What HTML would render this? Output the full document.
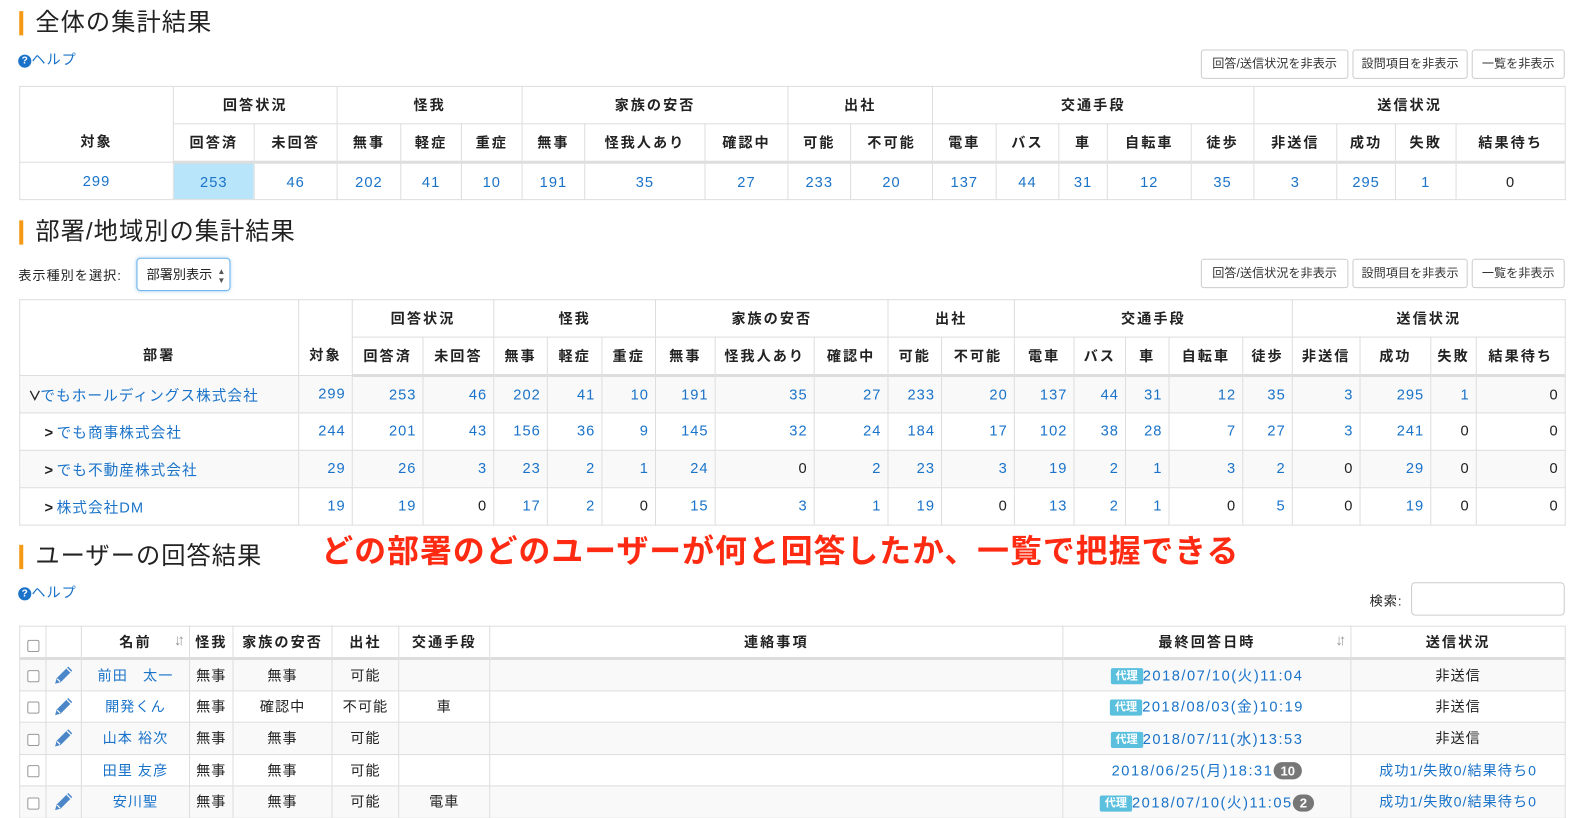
<!DOCTYPE html>
<html><head><meta charset="utf-8"><style>
*{box-sizing:border-box;margin:0;padding:0}
html,body{width:1585px;height:818px;overflow:hidden;background:#fff}
#w{width:1568px;height:810px;position:relative;transform:scale(1.0108);transform-origin:0 0;font-family:"Liberation Sans","Noto Sans CJK JP",sans-serif;color:#222;font-size:14px}
.abs{position:absolute}
h2{position:absolute;left:19px;font-weight:normal;font-size:24px;color:#222;padding-left:16px;line-height:26px;letter-spacing:1px}
h2:before{content:"";position:absolute;left:0;top:1px;width:4px;height:24px;background:#f59a16}
.help{position:absolute;left:18px;color:#1a73c9;font-size:14px;letter-spacing:1px}
.help i{display:inline-block;width:13px;height:13px;border-radius:50%;background:#1a73c9;color:#fff;font-style:normal;font-size:10px;font-weight:bold;text-align:center;line-height:13px;vertical-align:1px;letter-spacing:0}
.btn{position:absolute;height:29px;border:1px solid #ccc;border-radius:3px;background:#fff;font-size:12px;text-align:center;line-height:27px;color:#333}
table{position:absolute;left:19px;width:1529px;border-collapse:collapse;table-layout:fixed}
td,th{border:1px solid #ddd;text-align:center;font-size:14.5px;letter-spacing:1px;white-space:nowrap;overflow:hidden}
th{font-weight:bold;font-size:14px;letter-spacing:2px}
.b{color:#1a73c9}
thead tr:last-child th{border-bottom:3px solid #ddd}
.t1 th{height:37px}
.t1 thead tr:last-child th{height:38px}
.t1 td{height:37px;padding-top:2px}
.t2 th{height:37px}
.t2 thead tr:last-child th{height:38px}
.t2 td{height:37px;text-align:right;padding-right:6px}
.t2 td.l{text-align:left;padding-left:8px}
.t2 tbody tr:nth-child(odd) td,.t3 tbody tr:nth-child(odd) td{background:#f9f9f9}
.t3 th{height:32px}
.t3 td{height:31.5px;font-size:14px}
.t3 td.d{letter-spacing:1.5px;font-size:14.5px}
.cb{display:inline-block;width:12px;height:12px;border:1px solid #999;border-radius:2px;background:#fff;vertical-align:middle}
.dai{display:inline-block;background:#5bc0de;color:#fff;font-size:11px;font-weight:bold;padding:0 5px;border-radius:2px;line-height:16px;vertical-align:1px;letter-spacing:0}
.badge{display:inline-block;background:#777;color:#fff;font-size:13px;font-weight:bold;padding:0 7px;border-radius:9px;line-height:17px;vertical-align:0;letter-spacing:0}
.sort{position:absolute;right:8px;top:5px;color:#999;font-size:15px;font-weight:bold;letter-spacing:-4px}
.arr{color:#222;font-weight:bold;display:inline-block;width:12px}
.pen{vertical-align:middle}
</style></head><body><div id="w">

<h2 style="top:10px">全体の集計結果</h2>
<div class="help" style="top:49px"><i>?</i>ヘルプ</div>
<div class="btn" style="left:1188px;top:49px;width:146px">回答/送信状況を非表示</div>
<div class="btn" style="left:1338px;top:49px;width:114px">設問項目を非表示</div>
<div class="btn" style="left:1456px;top:49px;width:92px">一覧を非表示</div>

<table class="t1" style="top:85px">
<colgroup><col style="width:152px"><col style="width:80px"><col style="width:82px"><col style="width:63px"><col style="width:60px"><col style="width:60px"><col style="width:62px"><col style="width:119px"><col style="width:82px"><col style="width:62px"><col style="width:81px"><col style="width:63px"><col style="width:62px"><col style="width:48px"><col style="width:83px"><col style="width:62px"><col style="width:82px"><col style="width:58px"><col style="width:60px"><col style="width:108px"></colgroup>
<thead><tr><th rowspan="2" style="vertical-align:bottom;padding-bottom:10px">対象</th><th colspan="2">回答状況</th><th colspan="3">怪我</th><th colspan="3">家族の安否</th><th colspan="2">出社</th><th colspan="5">交通手段</th><th colspan="4">送信状況</th></tr>
<tr><th>回答済</th><th>未回答</th><th>無事</th><th>軽症</th><th>重症</th><th>無事</th><th>怪我人あり</th><th>確認中</th><th>可能</th><th>不可能</th><th>電車</th><th>バス</th><th>車</th><th>自転車</th><th>徒歩</th><th>非送信</th><th>成功</th><th>失敗</th><th>結果待ち</th></tr></thead>
<tbody><tr class="b"><td>299</td><td style="background:#b9e5fb">253</td><td>46</td><td>202</td><td>41</td><td>10</td><td>191</td><td>35</td><td>27</td><td>233</td><td>20</td><td>137</td><td>44</td><td>31</td><td>12</td><td>35</td><td>3</td><td>295</td><td>1</td><td style="color:#222">0</td></tr></tbody>
</table>

<h2 style="top:217px">部署/地域別の集計結果</h2>
<div class="abs" style="left:18px;top:262px;font-size:13px;letter-spacing:1px">表示種別を選択:</div>
<div class="abs" style="left:135px;top:255px;width:93px;height:33px;border:1px solid #66afe9;border-radius:4px;font-size:13px;line-height:31px;padding-left:9px;box-shadow:0 0 3px rgba(102,175,233,.5)">部署別表示<span style="font-size:8px;position:absolute;right:4px;top:0;line-height:9px;padding-top:8px;color:#555">▲<br>▼</span></div>
<div class="btn" style="left:1188px;top:256px;width:146px">回答/送信状況を非表示</div>
<div class="btn" style="left:1338px;top:256px;width:114px">設問項目を非表示</div>
<div class="btn" style="left:1456px;top:256px;width:92px">一覧を非表示</div>

<table class="t2" style="top:296px">
<colgroup><col style="width:276px"><col style="width:53px"><col style="width:70px"><col style="width:70px"><col style="width:53px"><col style="width:54px"><col style="width:53px"><col style="width:59px"><col style="width:98px"><col style="width:73px"><col style="width:53px"><col style="width:72px"><col style="width:59px"><col style="width:51px"><col style="width:43px"><col style="width:73px"><col style="width:49px"><col style="width:67px"><col style="width:70px"><col style="width:45px"><col style="width:88px"></colgroup>
<thead><tr><th rowspan="2" style="vertical-align:bottom;padding-bottom:10px">部署</th><th rowspan="2" style="vertical-align:bottom;padding-bottom:10px">対象</th><th colspan="2">回答状況</th><th colspan="3">怪我</th><th colspan="3">家族の安否</th><th colspan="2">出社</th><th colspan="5">交通手段</th><th colspan="4">送信状況</th></tr>
<tr><th>回答済</th><th>未回答</th><th>無事</th><th>軽症</th><th>重症</th><th>無事</th><th>怪我人あり</th><th>確認中</th><th>可能</th><th>不可能</th><th>電車</th><th>バス</th><th>車</th><th>自転車</th><th>徒歩</th><th>非送信</th><th>成功</th><th>失敗</th><th>結果待ち</th></tr></thead>
<tbody>
<tr class="b"><td class="l"><span class="arr" style="font-size:13px">∨</span>でもホールディングス株式会社</td><td>299</td><td>253</td><td>46</td><td>202</td><td>41</td><td>10</td><td>191</td><td>35</td><td>27</td><td>233</td><td>20</td><td>137</td><td>44</td><td>31</td><td>12</td><td>35</td><td>3</td><td>295</td><td>1</td><td style="color:#222">0</td></tr>
<tr class="b"><td class="l" style="padding-left:24px"><span class="arr">&gt;</span>でも商事株式会社</td><td>244</td><td>201</td><td>43</td><td>156</td><td>36</td><td>9</td><td>145</td><td>32</td><td>24</td><td>184</td><td>17</td><td>102</td><td>38</td><td>28</td><td>7</td><td>27</td><td>3</td><td>241</td><td style="color:#222">0</td><td style="color:#222">0</td></tr>
<tr class="b"><td class="l" style="padding-left:24px"><span class="arr">&gt;</span>でも不動産株式会社</td><td>29</td><td>26</td><td>3</td><td>23</td><td>2</td><td>1</td><td>24</td><td style="color:#222">0</td><td>2</td><td>23</td><td>3</td><td>19</td><td>2</td><td>1</td><td>3</td><td>2</td><td style="color:#222">0</td><td>29</td><td style="color:#222">0</td><td style="color:#222">0</td></tr>
<tr class="b"><td class="l" style="padding-left:24px"><span class="arr">&gt;</span>株式会社DM</td><td>19</td><td>19</td><td style="color:#222">0</td><td>17</td><td>2</td><td style="color:#222">0</td><td>15</td><td>3</td><td>1</td><td>19</td><td style="color:#222">0</td><td>13</td><td>2</td><td>1</td><td style="color:#222">0</td><td>5</td><td style="color:#222">0</td><td>19</td><td style="color:#222">0</td><td style="color:#222">0</td></tr>
</tbody></table>

<h2 style="top:538px">ユーザーの回答結果</h2>
<div class="abs" style="left:318px;top:520px;font-size:31.5px;font-weight:bold;color:#ff2a12;letter-spacing:1px">どの部署のどのユーザーが何と回答したか、一覧で把握できる</div>
<div class="help" style="top:576px"><i>?</i>ヘルプ</div>
<div class="abs" style="left:1355px;top:584px;font-size:13px;letter-spacing:1px">検索:</div>
<div class="abs" style="left:1396px;top:576px;width:152px;height:33px;border:1px solid #ccc;border-radius:4px"></div>

<table class="t3" style="top:619px">
<colgroup><col style="width:26px"><col style="width:35px"><col style="width:107px"><col style="width:43px"><col style="width:98px"><col style="width:66px"><col style="width:90px"><col style="width:567px"><col style="width:285px"><col style="width:212px"></colgroup>
<thead><tr><th style="vertical-align:bottom;padding-bottom:4px"><span class="cb"></span></th><th></th><th style="position:relative">名前<span class="sort">↓↑</span></th><th>怪我</th><th>家族の安否</th><th>出社</th><th>交通手段</th><th>連絡事項</th><th style="position:relative">最終回答日時<span class="sort">↓↑</span></th><th>送信状況</th></tr></thead>
<tbody>
<tr><td><span class="cb"></span></td><td><svg class="pen" width="22" height="22" viewBox="0 0 22 22"><path d="M15.5 2.5l4 4L8 18l-5.5 1.5L4 14z" fill="#4a86c8"/><path d="M14 4l4 4M4.5 14.5l3 3" stroke="#fff" stroke-width="1.2"/></svg></td><td class="b">前田　太一</td><td>無事</td><td>無事</td><td>可能</td><td></td><td></td><td class="b d"><span class="dai">代理</span>2018/07/10(火)11:04</td><td>非送信</td></tr>
<tr><td><span class="cb"></span></td><td><svg class="pen" width="22" height="22" viewBox="0 0 22 22"><path d="M15.5 2.5l4 4L8 18l-5.5 1.5L4 14z" fill="#4a86c8"/><path d="M14 4l4 4M4.5 14.5l3 3" stroke="#fff" stroke-width="1.2"/></svg></td><td class="b">開発くん</td><td>無事</td><td>確認中</td><td>不可能</td><td>車</td><td></td><td class="b d"><span class="dai">代理</span>2018/08/03(金)10:19</td><td>非送信</td></tr>
<tr><td><span class="cb"></span></td><td><svg class="pen" width="22" height="22" viewBox="0 0 22 22"><path d="M15.5 2.5l4 4L8 18l-5.5 1.5L4 14z" fill="#4a86c8"/><path d="M14 4l4 4M4.5 14.5l3 3" stroke="#fff" stroke-width="1.2"/></svg></td><td class="b">山本 裕次</td><td>無事</td><td>無事</td><td>可能</td><td></td><td></td><td class="b d"><span class="dai">代理</span>2018/07/11(水)13:53</td><td>非送信</td></tr>
<tr><td><span class="cb"></span></td><td></td><td class="b">田里 友彦</td><td>無事</td><td>無事</td><td>可能</td><td></td><td></td><td class="b d">2018/06/25(月)18:31<span class="badge">10</span></td><td class="b">成功1/失敗0/結果待ち0</td></tr>
<tr><td><span class="cb"></span></td><td><svg class="pen" width="22" height="22" viewBox="0 0 22 22"><path d="M15.5 2.5l4 4L8 18l-5.5 1.5L4 14z" fill="#4a86c8"/><path d="M14 4l4 4M4.5 14.5l3 3" stroke="#fff" stroke-width="1.2"/></svg></td><td class="b">安川聖</td><td>無事</td><td>無事</td><td>可能</td><td>電車</td><td></td><td class="b d"><span class="dai">代理</span>2018/07/10(火)11:05<span class="badge">2</span></td><td class="b">成功1/失敗0/結果待ち0</td></tr>
</tbody></table>
</div></body></html>
